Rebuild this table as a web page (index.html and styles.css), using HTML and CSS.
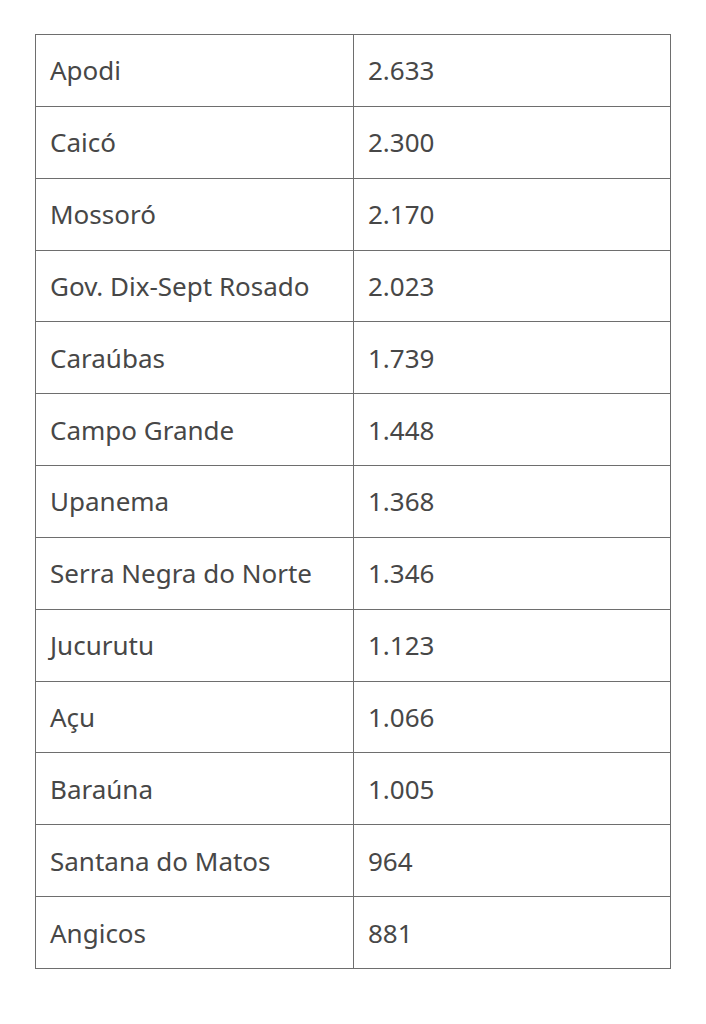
FILE: index.html
```html
<!DOCTYPE html>
<html lang="pt-BR"><head><meta charset="utf-8"><link rel="stylesheet" href="styles.css"></head>
<body>
<table class="data">
<tbody>
<tr><td>Apodi</td><td>2.633</td></tr>
<tr><td>Caicó</td><td>2.300</td></tr>
<tr><td>Mossoró</td><td>2.170</td></tr>
<tr><td>Gov. Dix-Sept Rosado</td><td>2.023</td></tr>
<tr><td>Caraúbas</td><td>1.739</td></tr>
<tr><td>Campo Grande</td><td>1.448</td></tr>
<tr><td>Upanema</td><td>1.368</td></tr>
<tr><td>Serra Negra do Norte</td><td>1.346</td></tr>
<tr><td>Jucurutu</td><td>1.123</td></tr>
<tr><td>Açu</td><td>1.066</td></tr>
<tr><td>Baraúna</td><td>1.005</td></tr>
<tr><td>Santana do Matos</td><td>964</td></tr>
<tr><td>Angicos</td><td>881</td></tr>
</tbody>
</table>
</body></html>
```
FILE: styles.css
```css
html,body{background:#fff;}
body{margin:0;padding:34px 0 0 35px;}
.data{border-collapse:collapse;width:636px;table-layout:fixed;font-family:"Noto Sans","Open Sans",sans-serif;font-size:26px;color:#474747;}
.data td{border:1px solid #6e6e6e;height:70.85px;padding:0 0 0 14px;vertical-align:middle;white-space:nowrap;}
.data td:first-child{width:303px;}
```
